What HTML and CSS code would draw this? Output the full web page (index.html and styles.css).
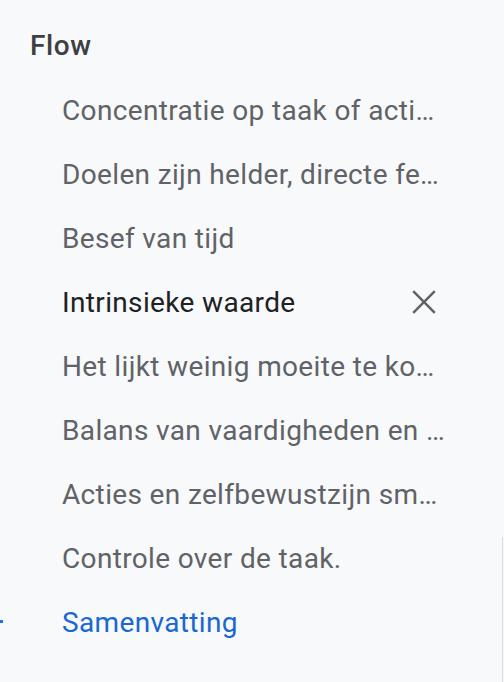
FILE: index.html
```html
<!DOCTYPE html>
<html lang="en">
<head>
    <meta charset="UTF-8">
    <meta name="viewport" content="width=device-width, initial-scale=1.0">
    <title>Flow</title>
    <link rel="stylesheet" href="styles.css">
</head>
<body>
    <nav class="outline">
        <h2 class="outline-title">Flow</h2>
        <ul class="outline-list">
            <li class="outline-item"><span class="item-text">Concentratie op taak of activiteit</span></li>
            <li class="outline-item"><span class="item-text">Doelen zijn helder, directe feedback</span></li>
            <li class="outline-item"><span class="item-text">Besef van tijd</span></li>
            <li class="outline-item active">
                <span class="item-text">Intrinsieke waarde</span>
                <button class="close-btn" aria-label="Verwijderen">
                    <svg width="24" height="24" viewBox="0 0 24 24"><path d="M1.2 1.2 22.8 22.8 M22.8 1.2 1.2 22.8" stroke="#5f6368" stroke-width="2.5"/></svg>
                </button>
            </li>
            <li class="outline-item"><span class="item-text">Het lijkt weinig moeite te kosten</span></li>
            <li class="outline-item"><span class="item-text">Balans van vaardigheden en uitdaging</span></li>
            <li class="outline-item"><span class="item-text">Acties en zelfbewustzijn smelten samen</span></li>
            <li class="outline-item"><span class="item-text">Controle over de taak.</span></li>
            <li class="outline-item link"><span class="item-text">Samenvatting</span></li>
        </ul>
        <span class="marker"></span>
    </nav>
    <div class="scroll-edge"></div>
</body>
</html>
```

FILE: styles.css
```css
body {
    margin: 0;
    background-color: #f8f9fa;
    font-family: 'Roboto', 'Noto Sans', sans-serif;
    height: 682px;
    overflow: hidden;
    position: relative;
}
.outline {
    padding-top: 14px;
    position: relative;
}
.outline-title {
    margin: 0;
    height: 64px;
    line-height: 64px;
    padding-left: 30px;
    font-size: 28px;
    font-weight: 500;
    letter-spacing: 0.6px;
    color: #3c4043;
}
.outline-list {
    list-style: none;
    margin: 0;
    padding: 0 58px 0 62px;
}
.outline-item {
    display: flex;
    align-items: center;
    height: 64px;
    font-size: 28px;
    letter-spacing: 0.35px;
    color: #5f6368;
}
.item-text {
    flex: 1;
    min-width: 0;
    white-space: nowrap;
    overflow: hidden;
    text-overflow: ellipsis;
}
.outline-item.active {
    color: #202124;
}
.outline-item.link {
    color: #1967d2;
}
.close-btn {
    border: none;
    background: none;
    padding: 0;
    margin-right: 10px;
    width: 24px;
    height: 24px;
    display: flex;
}
.marker {
    position: absolute;
    left: 0;
    top: 620px;
    width: 3px;
    height: 3px;
    background-color: #1a73e8;
}
.scroll-edge {
    position: absolute;
    right: 1px;
    top: 537px;
    bottom: 0;
    width: 1px;
    background-color: #dadce0;
}
```
